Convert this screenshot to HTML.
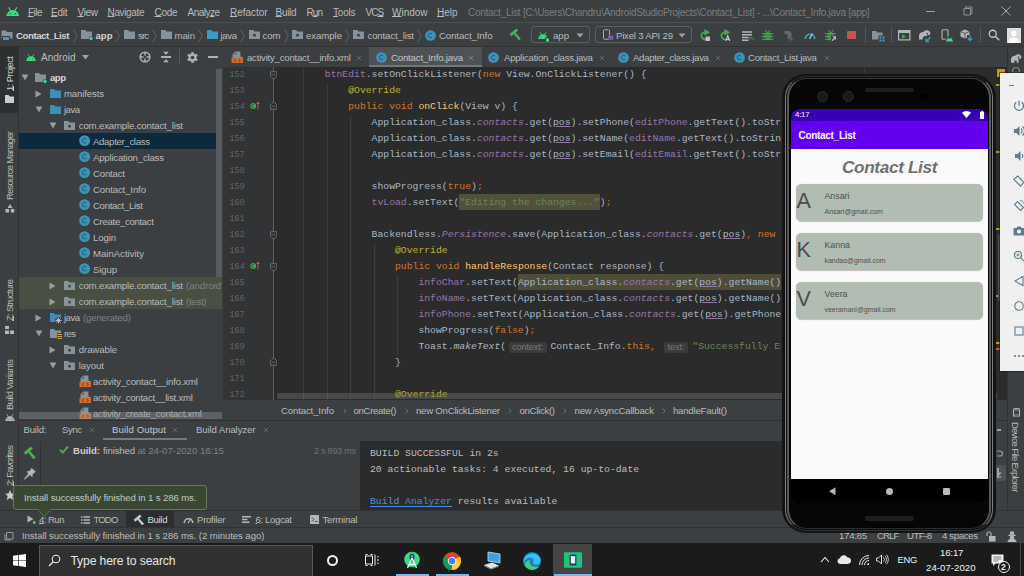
<!DOCTYPE html>
<html>
<head>
<meta charset="utf-8">
<title>Contact_List</title>
<style>
*{box-sizing:border-box;margin:0;padding:0}
html,body{width:1024px;height:576px;overflow:hidden;background:#3c3f41}
body{font-family:"Liberation Sans",sans-serif;font-size:9.6px;color:#bbbbbb;position:relative}
.a{position:absolute;white-space:nowrap}
.t{position:absolute;white-space:nowrap;line-height:12px;height:12px;color:#bbbbbb}
u{text-decoration:underline;text-underline-offset:.4px;text-decoration-thickness:1px}
.vt{position:absolute;white-space:nowrap;transform-origin:0 0;transform:rotate(-90deg);line-height:12px;height:12px;color:#bbbbbb}
.vtr{position:absolute;white-space:nowrap;transform-origin:0 0;transform:rotate(90deg);line-height:12px;height:12px;color:#bbbbbb}
.ln{position:absolute;font-family:"Liberation Mono",monospace;font-size:8.9px;color:#606366;line-height:16px;height:16px;text-align:right;width:30px;letter-spacing:-0.25px}
.cl{position:absolute;font-family:"Liberation Mono",monospace;font-size:9.75px;color:#a9b7c6;line-height:16px;height:16px;white-space:pre}
.mo{position:absolute;font-family:"Liberation Mono",monospace;font-size:9.75px;color:#bbbbbb;line-height:16px;height:16px;white-space:pre}
.k{color:#cc7832}.s{color:#6a8759}.an{color:#bbb529}.f{color:#9876aa}.fi{color:#9876aa;font-style:italic}.m{color:#ffc66d}.i{font-style:italic}
.pu{text-decoration:underline;text-decoration-color:#9876aa;text-underline-offset:1px}
.hl{background:#52503a;display:inline-block;height:16px;line-height:18px;vertical-align:top;margin-top:-1px}
.hl2{background:#4f4d38;display:inline-block;height:16px;line-height:18px;vertical-align:top;margin-top:-1px}
.hint{display:inline-block;font-family:"Liberation Sans",sans-serif;font-size:9.2px;line-height:11.5px;height:11.5px;color:#787878;background:#3b3b3b;border-radius:2px;padding:0 3.6px;letter-spacing:-0.15px}
</style>
</head>

<body>
<div class="a" style="left:0.0px;top:0.0px;width:1024.0px;height:23.0px;background:#3c3f41;"></div>
<svg class="a" style="left:5.5px;top:6.5px;" width="13.5" height="9.4" viewBox="0 0 20 14"><path d="M0.5 14a9.5 9.5 0 0 1 19 0z" fill="#3ddc84"/><path d="M4.2 1l2.6 4.4M15.8 1l-2.6 4.4" stroke="#3ddc84" stroke-width="1.6" stroke-linecap="round"/><circle cx="6" cy="10" r="1.1" fill="#3c3f41"/><circle cx="14" cy="10" r="1.1" fill="#3c3f41"/></svg>
<span class="t" style="left:28.0px;top:7.0px;font-size:10.00px;letter-spacing:-0.538px;"><u>F</u>ile</span>
<span class="t" style="left:51.0px;top:7.0px;font-size:10.00px;letter-spacing:-0.244px;"><u>E</u>dit</span>
<span class="t" style="left:77.5px;top:7.0px;font-size:10.00px;letter-spacing:-0.331px;"><u>V</u>iew</span>
<span class="t" style="left:107.5px;top:7.0px;font-size:10.00px;letter-spacing:-0.352px;"><u>N</u>avigate</span>
<span class="t" style="left:154.5px;top:7.0px;font-size:10.00px;letter-spacing:-0.302px;"><u>C</u>ode</span>
<span class="t" style="left:187.5px;top:7.0px;font-size:10.00px;letter-spacing:-0.513px;">Analy<u>z</u>e</span>
<span class="t" style="left:230.0px;top:7.0px;font-size:10.00px;letter-spacing:-0.042px;"><u>R</u>efactor</span>
<span class="t" style="left:275.5px;top:7.0px;font-size:10.00px;letter-spacing:-0.309px;"><u>B</u>uild</span>
<span class="t" style="left:306.5px;top:7.0px;font-size:10.00px;letter-spacing:-0.900px;">R<u>u</u>n</span>
<span class="t" style="left:333.0px;top:7.0px;font-size:10.00px;letter-spacing:-0.211px;"><u>T</u>ools</span>
<span class="t" style="left:365.5px;top:7.0px;font-size:10.00px;letter-spacing:-0.900px;">VC<u>S</u></span>
<span class="t" style="left:392.0px;top:7.0px;font-size:10.00px;letter-spacing:-0.013px;"><u>W</u>indow</span>
<span class="t" style="left:437.0px;top:7.0px;font-size:10.00px;letter-spacing:-0.022px;"><u>H</u>elp</span>
<span class="t" style="left:468.0px;top:7.0px;font-size:10.00px;letter-spacing:-0.267px;color:#7a7d80;">Contact_List [C:\Users\Chandru\AndroidStudioProjects\Contact_List] - ...\Contact_Info.java [app]</span>
<div class="a" style="left:926.0px;top:11.0px;width:9.0px;height:1.0px;background:#a0a3a5;"></div>
<svg class="a" style="left:963.0px;top:6.0px;" width="10.0" height="10.0" viewBox="0 0 20 20"><path d="M5 5V2h13v13h-3M2 5h13v13H2z" fill="none" stroke="#a0a3a5" stroke-width="1.6"/></svg>
<svg class="a" style="left:1001.0px;top:6.0px;" width="10.0" height="10.0" viewBox="0 0 20 20"><path d="M1 1l18 18M19 1L1 19" stroke="#b5b8ba" stroke-width="1.8"/></svg>
<div class="a" style="left:0.0px;top:22.0px;width:1024.0px;height:1.0px;background:#4d5052;"></div>
<svg class="a" style="left:1.0px;top:30.0px;" width="12.0" height="11.0" viewBox="0 0 24 22"><path d="M1 1h8l3 3h11v13H1z" fill="#87939a"/><rect x="3" y="13" width="14" height="8" fill="#3d9bc4" stroke="#3c3f41" stroke-width="2"/></svg>
<span class="t" style="left:16.0px;top:29.5px;font-size:9.60px;letter-spacing:-0.421px;color:#d2d2d2;font-weight:bold;">Contact_List</span>
<svg class="a" style="left:73.0px;top:28.5px;" width="5.0" height="14.0" viewBox="0 0 10 28"><path d="M1.5 1.5l7 12.5-7 12.5" fill="none" stroke="#6a6d70" stroke-width="1.6"/></svg>
<svg class="a" style="left:81.0px;top:30.0px;" width="13.0" height="11.0" viewBox="0 0 26 22"><path d="M0 0h8l3 3h11v15H0z" fill="#87939a"/><circle cx="20" cy="17" r="4.6" fill="#3c3f41"/><circle cx="20" cy="17" r="3.3" fill="#3ddc84"/></svg>
<span class="t" style="left:95.5px;top:29.5px;font-size:9.60px;letter-spacing:-0.033px;color:#d2d2d2;font-weight:bold;">app</span>
<svg class="a" style="left:115.0px;top:28.5px;" width="5.0" height="14.0" viewBox="0 0 10 28"><path d="M1.5 1.5l7 12.5-7 12.5" fill="none" stroke="#6a6d70" stroke-width="1.6"/></svg>
<svg class="a" style="left:124.0px;top:30.0px;" width="11.0" height="9.0" viewBox="0 0 22 18"><path d="M0 0h8l3 3h11v15H0z" fill="#87939a"/></svg>
<span class="t" style="left:138.0px;top:29.5px;font-size:9.60px;letter-spacing:-0.898px;">src</span>
<svg class="a" style="left:152.0px;top:28.5px;" width="5.0" height="14.0" viewBox="0 0 10 28"><path d="M1.5 1.5l7 12.5-7 12.5" fill="none" stroke="#6a6d70" stroke-width="1.6"/></svg>
<svg class="a" style="left:161.0px;top:30.0px;" width="11.0" height="9.0" viewBox="0 0 22 18"><path d="M0 0h8l3 3h11v15H0z" fill="#87939a"/></svg>
<span class="t" style="left:174.5px;top:29.5px;font-size:9.60px;letter-spacing:-0.102px;">main</span>
<svg class="a" style="left:198.0px;top:28.5px;" width="5.0" height="14.0" viewBox="0 0 10 28"><path d="M1.5 1.5l7 12.5-7 12.5" fill="none" stroke="#6a6d70" stroke-width="1.6"/></svg>
<svg class="a" style="left:206.5px;top:30.0px;" width="11.0" height="9.0" viewBox="0 0 22 18"><path d="M0 0h8l3 3h11v15H0z" fill="#3d9bc4"/></svg>
<span class="t" style="left:220.5px;top:29.5px;font-size:9.60px;letter-spacing:-0.370px;">java</span>
<svg class="a" style="left:240.0px;top:28.5px;" width="5.0" height="14.0" viewBox="0 0 10 28"><path d="M1.5 1.5l7 12.5-7 12.5" fill="none" stroke="#6a6d70" stroke-width="1.6"/></svg>
<svg class="a" style="left:248.5px;top:30.0px;" width="11.0" height="9.0" viewBox="0 0 22 18"><path d="M0 0h8l3 3h11v15H0z" fill="#87939a"/><circle cx="11" cy="10.5" r="2.8" fill="#3c3f41"/></svg>
<span class="t" style="left:262.5px;top:29.5px;font-size:9.60px;letter-spacing:-0.068px;">com</span>
<svg class="a" style="left:284.0px;top:28.5px;" width="5.0" height="14.0" viewBox="0 0 10 28"><path d="M1.5 1.5l7 12.5-7 12.5" fill="none" stroke="#6a6d70" stroke-width="1.6"/></svg>
<svg class="a" style="left:292.0px;top:30.0px;" width="11.0" height="9.0" viewBox="0 0 22 18"><path d="M0 0h8l3 3h11v15H0z" fill="#87939a"/><circle cx="11" cy="10.5" r="2.8" fill="#3c3f41"/></svg>
<span class="t" style="left:306.0px;top:29.5px;font-size:9.60px;letter-spacing:-0.047px;">example</span>
<svg class="a" style="left:345.0px;top:28.5px;" width="5.0" height="14.0" viewBox="0 0 10 28"><path d="M1.5 1.5l7 12.5-7 12.5" fill="none" stroke="#6a6d70" stroke-width="1.6"/></svg>
<svg class="a" style="left:353.0px;top:30.0px;" width="11.0" height="9.0" viewBox="0 0 22 18"><path d="M0 0h8l3 3h11v15H0z" fill="#87939a"/><circle cx="11" cy="10.5" r="2.8" fill="#3c3f41"/></svg>
<span class="t" style="left:367.5px;top:29.5px;font-size:9.60px;letter-spacing:-0.138px;">contact_list</span>
<svg class="a" style="left:417.0px;top:28.5px;" width="5.0" height="14.0" viewBox="0 0 10 28"><path d="M1.5 1.5l7 12.5-7 12.5" fill="none" stroke="#6a6d70" stroke-width="1.6"/></svg>
<svg class="a" style="left:424.5px;top:29.5px;" width="11.0" height="11.0" viewBox="0 0 22 22"><circle cx="11" cy="11" r="10.700" fill="#3a95bb"/><path d="M14.300 8a4.400 4.400 0 1 0 0 6" fill="none" stroke="#2b4f62" stroke-width="1.900"/></svg>
<span class="t" style="left:439.0px;top:29.5px;font-size:9.60px;letter-spacing:-0.085px;">Contact_Info</span>
<svg class="a" style="left:509.1px;top:28.3px;" width="12.6" height="12.6" viewBox="0 0 28 28"><g transform="translate(10.800,9.600) rotate(-40)" fill="#4caf57"><rect x="-9.700" y="-3" width="19.400" height="6.200"/><path d="M-2.300 0h4.600l.700 20.500h-6z"/></g></svg>
<div class="a" style="left:531.0px;top:26.0px;width:58.5px;height:17.0px;background:transparent;border:1px solid #5e6060;border-radius:3px"></div>
<svg class="a" style="left:538.0px;top:32.0px;" width="10.0" height="7.0" viewBox="0 0 20 14"><path d="M0.5 14a9.5 9.5 0 0 1 19 0z" fill="#3ddc84"/><path d="M4.2 1l2.6 4.4M15.8 1l-2.6 4.4" stroke="#3ddc84" stroke-width="1.6" stroke-linecap="round"/><circle cx="6" cy="10" r="1.1" fill="#3c3f41"/><circle cx="14" cy="10" r="1.1" fill="#3c3f41"/></svg>
<div class="a" style="left:545.5px;top:38.0px;width:3.5px;height:3.5px;background:#3ddc84;border-radius:2px;box-shadow:0 0 0 1px #3c3f41"></div>
<span class="t" style="left:553.0px;top:29.5px;font-size:9.60px;letter-spacing:-0.008px;">app</span>
<svg class="a" style="left:576.0px;top:33.0px;" width="8.0" height="5.0" viewBox="0 0 16 10"><path d="M1 1h14L8 9z" fill="#a0a3a5"/></svg>
<div class="a" style="left:594.5px;top:26.0px;width:97.5px;height:17.0px;background:transparent;border:1px solid #5e6060;border-radius:3px"></div>
<svg class="a" style="left:602.0px;top:29.0px;" width="12.0" height="12.0" viewBox="0 0 24 24"><rect x="3" y="1.5" width="12" height="19" rx="2" fill="none" stroke="#a7aaad" stroke-width="2"/><rect x="12" y="13" width="10" height="8" fill="#3c3f41"/><rect x="13.5" y="14.5" width="8" height="6" fill="none" stroke="#b05fc4" stroke-width="1.6"/><path d="M15 19l5-1.5-4-2.5z" fill="#3ddc84"/></svg>
<span class="t" style="left:616.0px;top:29.5px;font-size:9.60px;letter-spacing:-0.213px;">Pixel 3 API 29</span>
<svg class="a" style="left:678.0px;top:33.0px;" width="8.0" height="5.0" viewBox="0 0 16 10"><path d="M1 1h14L8 9z" fill="#a0a3a5"/></svg>
<svg class="a" style="left:699.3px;top:29.0px;" width="11.5" height="12.0" viewBox="0 0 23 24"><path d="M10.500 6.500A7.200 7.200 0 1 0 13.500 20.600" fill="none" stroke="#4aa854" stroke-width="3.500"/><path d="M10.500 0l12 6.500-12 6.500z" fill="#4aa854"/><rect x="13" y="15" width="9" height="9" fill="#c0c3c5"/></svg>
<svg class="a" style="left:719.3px;top:29.0px;" width="11.5" height="12.0" viewBox="0 0 23 24"><path d="M10.500 6.500A7.200 7.200 0 1 0 13.500 20.600" fill="none" stroke="#4aa854" stroke-width="3.500"/><path d="M10.500 0l12 6.500-12 6.500z" fill="#4aa854"/><path d="M13.500 24l4-10.500 4 10.500M15 21h5" fill="none" stroke="#c4c7c9" stroke-width="2.400"/></svg>
<svg class="a" style="left:742.0px;top:30.5px;" width="12.0" height="10.0" viewBox="0 0 24 20"><path d="M0 2h20M0 7.500h20M0 13h13M0 18.500h13" stroke="#b4b7ba" stroke-width="2.900"/><path d="M16 13.500c4-2 7 0 7 4m-7.500-4.500l.5 4" stroke="#4aa854" stroke-width="2" fill="none"/></svg>
<svg class="a" style="left:762.0px;top:28.5px;" width="11.5" height="12.5" viewBox="0 0 23 25"><ellipse cx="11.500" cy="14.500" rx="6.800" ry="8" fill="#4aa854"/><path d="M7 2l3.500 5M16 2l-3.500 5" stroke="#4aa854" stroke-width="2"/><path d="M0 9.500h23M0 15h23M0 20.500h23" stroke="#4aa854" stroke-width="2"/><path d="M5.500 12.200h12M5.500 17.800h12" stroke="#3c3f41" stroke-width="1.300"/></svg>
<svg class="a" style="left:783.0px;top:29.5px;" width="12.0" height="12.0" viewBox="0 0 24 24"><path d="M3 2h10l4 4v12H9V8H3z" fill="#66696c"/><path d="M12 12l10 5.5-10 5.5z" fill="#5a5d60"/></svg>
<svg class="a" style="left:803.5px;top:30.0px;" width="12.0" height="10.0" viewBox="0 0 24 20"><path d="M2.5 18A9.5 9.5 0 0 1 21.5 18" fill="none" stroke="#3d9bc4" stroke-width="3.4"/><path d="M11 18l6-11" stroke="#c0c3c5" stroke-width="2.6"/></svg>
<svg class="a" style="left:824.5px;top:28.5px;" width="11.5" height="12.5" viewBox="0 0 23 25"><ellipse cx="11.500" cy="14.500" rx="6.800" ry="8" fill="#4aa854"/><path d="M7 2l3.500 5M16 2l-3.500 5" stroke="#4aa854" stroke-width="2"/><path d="M0 9.500h23M0 15h23M0 20.500h23" stroke="#4aa854" stroke-width="2"/><path d="M5.500 12.200h12M5.500 17.800h12" stroke="#3c3f41" stroke-width="1.300"/><rect x="12" y="13" width="12" height="12" fill="#3c3f41"/><path d="M14 23.500l8-8m-6.500 0h6.500v6.500" stroke="#c0c3c5" stroke-width="2.400" fill="none"/></svg>
<div class="a" style="left:847.0px;top:30.5px;width:9.0px;height:8.5px;background:#c75450;border-radius:1px"></div>
<div class="a" style="left:864.5px;top:27.0px;width:1.0px;height:16.0px;background:#555759;"></div>
<svg class="a" style="left:872.0px;top:29.5px;" width="12.5" height="12.0" viewBox="0 0 25 24"><path d="M0 2h8l3 3h10v14H0z" fill="#87939a"/><rect x="13" y="11" width="12" height="13" fill="#3c3f41"/><path d="M15 13h4v4h-4zM21 13h4v4h-4zM15 19h4v4h-4zM21 19h4v4h-4z" fill="#3d9bc4"/></svg>
<div class="a" style="left:891.0px;top:27.0px;width:1.0px;height:16.0px;background:#555759;"></div>
<svg class="a" style="left:898.0px;top:30.0px;" width="12.5" height="10.5" viewBox="0 0 25 21"><rect x="1.2" y="1.2" width="22.6" height="18.6" fill="none" stroke="#b4b7ba" stroke-width="2.4"/><rect x="1" y="1" width="23" height="5" fill="#b4b7ba"/><path d="M8 8.5l8 4.5-8 4.5z" fill="#4aa854"/></svg>
<svg class="a" style="left:918.0px;top:30.0px;" width="13.0" height="10.0" viewBox="0 0 26 20"><path d="M2 19v-7c0-5 4-8 9-8 2-3 6-4 9-3 4 1 6 5 4 8-1 2-4 2-5 0-.6-1.200 .5-2.600 2-2-.5-1.800-3-2-4.500-.5 1 2 2 4 2 6v6.500h-4v-5h-5v5z" fill="#b4b7ba"/></svg>
<svg class="a" style="left:924.0px;top:36.0px;" width="8.0" height="7.0" viewBox="0 0 16 14"><rect width="16" height="14" fill="#3c3f41"/><path d="M13 2L4 11m0-6v6h6" stroke="#3d9bc4" stroke-width="2.6" fill="none"/></svg>
<svg class="a" style="left:941.0px;top:29.0px;" width="12.0" height="13.0" viewBox="0 0 24 26"><rect x="2" y="1.500" width="12" height="19" rx="2" fill="none" stroke="#b4b7ba" stroke-width="2.2"/><rect x="9" y="15" width="15" height="11" fill="#3c3f41"/><path d="M10.500 25a6.500 6.500 0 0 1 13 0z" fill="#3ddc84"/><path d="M12.500 17l1.500 2.500M21.500 17l-1.500 2.500" stroke="#3ddc84" stroke-width="1.400"/></svg>
<svg class="a" style="left:960.0px;top:29.0px;" width="13.0" height="13.0" viewBox="0 0 26 26"><path d="M10 1l9 4v10l-9 4-9-4V5z" fill="#b4b7ba"/><path d="M10 9v10M1 5l9 4 9-4" stroke="#3c3f41" stroke-width="1.600" fill="none"/><rect x="14" y="12" width="12" height="14" fill="#3c3f41"/><path d="M20 13v10m-4.500-4.500l4.500 4.500 4.500-4.500" stroke="#3d9bc4" stroke-width="2.600" fill="none"/></svg>
<div class="a" style="left:980.0px;top:27.0px;width:1.0px;height:16.0px;background:#555759;"></div>
<svg class="a" style="left:987.5px;top:29.0px;" width="12.0" height="12.0" viewBox="0 0 24 24"><circle cx="9.500" cy="9.500" r="7" fill="none" stroke="#c4c7c9" stroke-width="2.600"/><path d="M14.500 14.500l8 8" stroke="#c4c7c9" stroke-width="3"/></svg>
<div class="a" style="left:1007.0px;top:27.5px;width:13.5px;height:15.0px;background:#dcdcdc;"></div>
<svg class="a" style="left:1007.0px;top:27.5px;" width="13.5" height="15.0" viewBox="0 0 27 30"><circle cx="13.500" cy="11" r="5.500" fill="#fff"/><path d="M3 30c0-8 5-11 10.500-11S24 22 24 30z" fill="#fff"/></svg>
<div class="a" style="left:0.0px;top:46.0px;width:1024.0px;height:1.0px;background:#323232;"></div>
<div class="a" style="left:0.0px;top:47.0px;width:18.0px;height:463.0px;background:#3c3f41;"></div>
<div class="a" style="left:0.0px;top:46.0px;width:18.0px;height:67.0px;background:#2d2f30;"></div>
<div class="a" style="left:18.0px;top:47.0px;width:1.0px;height:463.0px;background:#323232;"></div>
<span class="vt" style="left:4.0px;top:91.0px;font-size:9.40px;letter-spacing:-0.523px;color:#d0d0d0"><u>1</u>: Project</span>
<svg class="a" style="left:5.0px;top:95.0px;" width="9.0" height="8.0" viewBox="0 0 18 16"><path d="M0 0h7l3 3h8v13H0z" fill="#c9ccce"/></svg>
<span class="vt" style="left:4.0px;top:200.0px;font-size:9.40px;letter-spacing:-0.729px;color:#bbbbbb">Resource Manager</span>
<svg class="a" style="left:5.0px;top:204.0px;" width="10.0" height="9.0" viewBox="0 0 20 18"><path d="M10 0l5 8H5z" fill="#b4b7ba"/><rect x="1" y="10" width="7" height="7" fill="#b4b7ba"/><circle cx="15" cy="13.500" r="4" fill="#b4b7ba"/></svg>
<span class="vt" style="left:4.0px;top:321.0px;font-size:9.40px;letter-spacing:-0.645px;color:#bbbbbb"><u>Z</u>: Structure</span>
<svg class="a" style="left:5.0px;top:326.0px;" width="9.0" height="8.0" viewBox="0 0 18 16"><rect x="0" y="0" width="8" height="6" fill="#b4b7ba"/><rect x="0" y="9" width="8" height="7" fill="#b4b7ba"/><rect x="10" y="9" width="8" height="7" fill="#b4b7ba"/></svg>
<span class="vt" style="left:4.0px;top:410.0px;font-size:9.40px;letter-spacing:-0.484px;color:#bbbbbb">Build Variants</span>
<svg class="a" style="left:5.0px;top:414.0px;" width="10.0" height="7.0" viewBox="0 0 20 14"><path d="M0.5 14a9.5 9.5 0 0 1 19 0z" fill="#b4b7ba"/><path d="M4.2 1l2.6 4.4M15.8 1l-2.6 4.4" stroke="#b4b7ba" stroke-width="1.6" stroke-linecap="round"/><circle cx="6" cy="10" r="1.1" fill="#3c3f41"/><circle cx="14" cy="10" r="1.1" fill="#3c3f41"/></svg>
<span class="vt" style="left:4.0px;top:486.0px;font-size:9.40px;letter-spacing:-0.737px;color:#bbbbbb"><u>2</u>: Favorites</span>
<svg class="a" style="left:5.0px;top:490.0px;" width="10.0" height="10.0" viewBox="0 0 20 20"><path d="M10 0l3 7 7 .6-5.400 4.600L16.500 20 10 16 3.500 20l1.900-7.800L0 7.600 7 7z" fill="#c9ccce"/></svg>
<div class="a" style="left:19.0px;top:47.0px;width:204.0px;height:373.0px;background:#3c3f41;"></div>
<svg class="a" style="left:26.0px;top:53.5px;" width="10.0" height="7.0" viewBox="0 0 20 14"><path d="M0.5 14a9.5 9.5 0 0 1 19 0z" fill="#3ddc84"/><path d="M4.2 1l2.6 4.4M15.8 1l-2.6 4.4" stroke="#3ddc84" stroke-width="1.6" stroke-linecap="round"/><circle cx="6" cy="10" r="1.1" fill="#3c3f41"/><circle cx="14" cy="10" r="1.1" fill="#3c3f41"/></svg>
<span class="t" style="left:41.0px;top:52.0px;font-size:10.00px;letter-spacing:0.006px;">Android</span>
<svg class="a" style="left:82.0px;top:55.0px;" width="7.0" height="4.5" viewBox="0 0 14 9"><path d="M0 0h14L7 9z" fill="#a0a3a5"/></svg>
<svg class="a" style="left:139.0px;top:51.0px;" width="12.0" height="12.0" viewBox="0 0 24 24"><circle cx="12" cy="12" r="9.700" fill="none" stroke="#afb1b3" stroke-width="3"/><path d="M12 2.500v6.500M12 15v6.500M2.500 12h6.500M15 12h6.500" stroke="#afb1b3" stroke-width="3"/></svg>
<svg class="a" style="left:160.0px;top:51.0px;" width="12.0" height="12.0" viewBox="0 0 24 24"><path d="M2 12h20" stroke="#afb1b3" stroke-width="4"/><path d="M6.500 1.500h11l-5.500 6.500zM6.500 22.500h11l-5.500-6.500z" fill="#afb1b3"/></svg>
<div class="a" style="left:179.0px;top:48.5px;width:1.0px;height:15.5px;background:#555759;"></div>
<svg class="a" style="left:186.5px;top:51.5px;" width="11.0" height="11.0" viewBox="0 0 24 24"><g transform="translate(12 12)" fill="#afb1b3"><rect x="-2.700" y="-11.800" width="5.400" height="5.500" transform="rotate(0)"/><rect x="-2.700" y="-11.800" width="5.400" height="5.500" transform="rotate(60)"/><rect x="-2.700" y="-11.800" width="5.400" height="5.500" transform="rotate(120)"/><rect x="-2.700" y="-11.800" width="5.400" height="5.500" transform="rotate(180)"/><rect x="-2.700" y="-11.800" width="5.400" height="5.500" transform="rotate(240)"/><rect x="-2.700" y="-11.800" width="5.400" height="5.500" transform="rotate(300)"/><circle r="6.300" fill="none" stroke="#afb1b3" stroke-width="4.600"/></g></svg>
<div class="a" style="left:208.0px;top:55.8px;width:10.0px;height:2.2px;background:#afb1b3;"></div>
<div class="a" style="left:19.0px;top:133.0px;width:203.0px;height:16.0px;background:#0d293e;"></div>
<div class="a" style="left:19.0px;top:277.0px;width:203.0px;height:32.0px;background:#494f43;"></div>
<div class="a" style="left:19px;top:47px;width:203px;height:371.5px;overflow:hidden"><div class="a" style="left:-19px;top:-47px">
<svg class="a" style="left:21.0px;top:74.2px;" width="8.0" height="7.0" viewBox="0 0 16 14"><path d="M1 1h14l-7 12z" fill="#9b9ea1"/></svg>
<svg class="a" style="left:35.0px;top:72.8px;" width="13.0" height="11.0" viewBox="0 0 26 22"><path d="M0 0h8l3 3h11v15H0z" fill="#87939a"/><circle cx="20" cy="17" r="4.6" fill="#3c3f41"/><circle cx="20" cy="17" r="3.3" fill="#3ddc84"/></svg>
<span class="t" style="left:50.0px;top:71.8px;font-size:9.60px;letter-spacing:-0.533px;color:#d8d8d8;font-weight:bold;">app</span>
<svg class="a" style="left:35.0px;top:89.8px;" width="7.0" height="8.0" viewBox="0 0 14 16"><path d="M1 1l12 7-12 7z" fill="#9b9ea1"/></svg>
<svg class="a" style="left:50.0px;top:88.8px;" width="11.0" height="9.0" viewBox="0 0 22 18"><path d="M0 0h8l3 3h11v15H0z" fill="#3d8fb8"/></svg>
<span class="t" style="left:64.0px;top:87.8px;font-size:9.60px;letter-spacing:-0.135px;">manifests</span>
<svg class="a" style="left:35.0px;top:106.2px;" width="8.0" height="7.0" viewBox="0 0 16 14"><path d="M1 1h14l-7 12z" fill="#9b9ea1"/></svg>
<svg class="a" style="left:50.0px;top:104.8px;" width="11.0" height="9.0" viewBox="0 0 22 18"><path d="M0 0h8l3 3h11v15H0z" fill="#3d8fb8"/></svg>
<span class="t" style="left:64.0px;top:103.8px;font-size:9.60px;letter-spacing:-0.537px;">java</span>
<svg class="a" style="left:49.0px;top:122.2px;" width="8.0" height="7.0" viewBox="0 0 16 14"><path d="M1 1h14l-7 12z" fill="#9b9ea1"/></svg>
<svg class="a" style="left:64.0px;top:120.8px;" width="11.0" height="9.0" viewBox="0 0 22 18"><path d="M0 0h8l3 3h11v15H0z" fill="#87939a"/><circle cx="11" cy="10.5" r="2.8" fill="#3c3f41"/></svg>
<span class="t" style="left:78.8px;top:119.8px;font-size:9.60px;letter-spacing:-0.153px;">com.example.contact_list</span>
<svg class="a" style="left:78.5px;top:135.3px;" width="11.2" height="11.2" viewBox="0 0 22 22"><circle cx="11" cy="11" r="10.700" fill="#3a95bb"/><path d="M14.300 8a4.400 4.400 0 1 0 0 6" fill="none" stroke="#2b4f62" stroke-width="1.900"/></svg>
<span class="t" style="left:93.0px;top:135.8px;font-size:9.60px;letter-spacing:-0.319px;">Adapter_class</span>
<svg class="a" style="left:78.5px;top:151.3px;" width="11.2" height="11.2" viewBox="0 0 22 22"><circle cx="11" cy="11" r="10.700" fill="#3a95bb"/><path d="M14.300 8a4.400 4.400 0 1 0 0 6" fill="none" stroke="#2b4f62" stroke-width="1.900"/></svg>
<span class="t" style="left:93.0px;top:151.8px;font-size:9.60px;letter-spacing:-0.198px;">Application_class</span>
<svg class="a" style="left:78.5px;top:167.3px;" width="11.2" height="11.2" viewBox="0 0 22 22"><circle cx="11" cy="11" r="10.700" fill="#3a95bb"/><path d="M14.300 8a4.400 4.400 0 1 0 0 6" fill="none" stroke="#2b4f62" stroke-width="1.900"/></svg>
<span class="t" style="left:93.0px;top:167.8px;font-size:9.60px;letter-spacing:-0.180px;">Contact</span>
<svg class="a" style="left:78.5px;top:183.3px;" width="11.2" height="11.2" viewBox="0 0 22 22"><circle cx="11" cy="11" r="10.700" fill="#3a95bb"/><path d="M14.300 8a4.400 4.400 0 1 0 0 6" fill="none" stroke="#2b4f62" stroke-width="1.900"/></svg>
<span class="t" style="left:93.0px;top:183.8px;font-size:9.60px;letter-spacing:-0.130px;">Contact_Info</span>
<svg class="a" style="left:78.5px;top:199.3px;" width="11.2" height="11.2" viewBox="0 0 22 22"><circle cx="11" cy="11" r="10.700" fill="#3a95bb"/><path d="M14.300 8a4.400 4.400 0 1 0 0 6" fill="none" stroke="#2b4f62" stroke-width="1.900"/></svg>
<span class="t" style="left:93.0px;top:199.8px;font-size:9.60px;letter-spacing:-0.305px;">Contact_List</span>
<svg class="a" style="left:78.5px;top:215.3px;" width="11.2" height="11.2" viewBox="0 0 22 22"><circle cx="11" cy="11" r="10.700" fill="#3a95bb"/><path d="M14.300 8a4.400 4.400 0 1 0 0 6" fill="none" stroke="#2b4f62" stroke-width="1.900"/></svg>
<span class="t" style="left:93.0px;top:215.8px;font-size:9.60px;letter-spacing:-0.315px;">Create_contact</span>
<svg class="a" style="left:78.5px;top:231.3px;" width="11.2" height="11.2" viewBox="0 0 22 22"><circle cx="11" cy="11" r="10.700" fill="#3a95bb"/><path d="M14.300 8a4.400 4.400 0 1 0 0 6" fill="none" stroke="#2b4f62" stroke-width="1.900"/></svg>
<span class="t" style="left:93.0px;top:231.8px;font-size:9.60px;letter-spacing:-0.122px;">Login</span>
<svg class="a" style="left:78.5px;top:247.3px;" width="11.2" height="11.2" viewBox="0 0 22 22"><circle cx="11" cy="11" r="10.700" fill="#3a95bb"/><path d="M14.300 8a4.400 4.400 0 1 0 0 6" fill="none" stroke="#2b4f62" stroke-width="1.900"/></svg>
<span class="t" style="left:93.0px;top:247.8px;font-size:9.60px;letter-spacing:-0.019px;">MainActivity</span>
<svg class="a" style="left:78.5px;top:263.4px;" width="11.2" height="11.2" viewBox="0 0 22 22"><circle cx="11" cy="11" r="10.700" fill="#3a95bb"/><path d="M14.300 8a4.400 4.400 0 1 0 0 6" fill="none" stroke="#2b4f62" stroke-width="1.900"/></svg>
<span class="t" style="left:93.0px;top:263.8px;font-size:9.60px;letter-spacing:-0.138px;">Sigup</span>
<svg class="a" style="left:49.0px;top:281.8px;" width="7.0" height="8.0" viewBox="0 0 14 16"><path d="M1 1l12 7-12 7z" fill="#9b9ea1"/></svg>
<svg class="a" style="left:64.0px;top:280.8px;" width="11.0" height="9.0" viewBox="0 0 22 18"><path d="M0 0h8l3 3h11v15H0z" fill="#87939a"/><circle cx="11" cy="10.5" r="2.8" fill="#494f43"/></svg>
<span class="t" style="left:78.8px;top:279.8px;font-size:9.60px;letter-spacing:-0.153px;">com.example.contact_list</span>
<span class="t" style="left:186.0px;top:279.8px;font-size:9.60px;letter-spacing:-0.002px;color:#7f8385;">(androidTest)</span>
<svg class="a" style="left:49.0px;top:297.8px;" width="7.0" height="8.0" viewBox="0 0 14 16"><path d="M1 1l12 7-12 7z" fill="#9b9ea1"/></svg>
<svg class="a" style="left:64.0px;top:296.8px;" width="11.0" height="9.0" viewBox="0 0 22 18"><path d="M0 0h8l3 3h11v15H0z" fill="#87939a"/><circle cx="11" cy="10.5" r="2.8" fill="#494f43"/></svg>
<span class="t" style="left:78.8px;top:295.8px;font-size:9.60px;letter-spacing:-0.153px;">com.example.contact_list</span>
<span class="t" style="left:186.0px;top:295.8px;font-size:9.60px;letter-spacing:-0.273px;color:#7f8385;">(test)</span>
<svg class="a" style="left:35.0px;top:313.8px;" width="7.0" height="8.0" viewBox="0 0 14 16"><path d="M1 1l12 7-12 7z" fill="#9b9ea1"/></svg>
<svg class="a" style="left:50.0px;top:312.8px;" width="11.0" height="9.0" viewBox="0 0 22 18"><path d="M0 0h8l3 3h11v15H0z" fill="#3d8fb8"/></svg>
<svg class="a" style="left:54.5px;top:317.2px;" width="7.0" height="7.0" viewBox="0 0 14 14"><circle cx="7" cy="7" r="7" fill="#3c3f41"/><path d="M7 1v12M1 7h12M2.800 2.800l8.400 8.400M11.200 2.800l-8.400 8.400" stroke="#d0d3d5" stroke-width="1.600"/></svg>
<span class="t" style="left:64.0px;top:311.8px;font-size:9.60px;letter-spacing:-0.537px;">java</span>
<span class="t" style="left:83.0px;top:311.8px;font-size:9.60px;letter-spacing:-0.163px;color:#7f8385;">(generated)</span>
<svg class="a" style="left:35.0px;top:330.2px;" width="8.0" height="7.0" viewBox="0 0 16 14"><path d="M1 1h14l-7 12z" fill="#9b9ea1"/></svg>
<svg class="a" style="left:50.0px;top:328.8px;" width="11.0" height="9.0" viewBox="0 0 22 18"><path d="M0 0h8l3 3h11v15H0z" fill="#87939a"/></svg>
<svg class="a" style="left:56.5px;top:333.2px;" width="5.5" height="6.5" viewBox="0 0 11 13"><rect width="11" height="13" fill="#3c3f41"/><path d="M1 3h10M1 7h10M1 11h10" stroke="#e0a030" stroke-width="2.400"/></svg>
<span class="t" style="left:64.0px;top:327.8px;font-size:9.60px;letter-spacing:-0.668px;">res</span>
<svg class="a" style="left:49.0px;top:345.8px;" width="7.0" height="8.0" viewBox="0 0 14 16"><path d="M1 1l12 7-12 7z" fill="#9b9ea1"/></svg>
<svg class="a" style="left:64.0px;top:344.8px;" width="11.0" height="9.0" viewBox="0 0 22 18"><path d="M0 0h8l3 3h11v15H0z" fill="#87939a"/><circle cx="11" cy="10.5" r="2.8" fill="#3c3f41"/></svg>
<span class="t" style="left:78.8px;top:343.8px;font-size:9.60px;letter-spacing:-0.101px;">drawable</span>
<svg class="a" style="left:49.0px;top:362.2px;" width="8.0" height="7.0" viewBox="0 0 16 14"><path d="M1 1h14l-7 12z" fill="#9b9ea1"/></svg>
<svg class="a" style="left:64.0px;top:360.8px;" width="11.0" height="9.0" viewBox="0 0 22 18"><path d="M0 0h8l3 3h11v15H0z" fill="#87939a"/><circle cx="11" cy="10.5" r="2.8" fill="#3c3f41"/></svg>
<span class="t" style="left:78.8px;top:359.8px;font-size:9.60px;letter-spacing:-0.073px;">layout</span>
<svg class="a" style="left:79.2px;top:375.2px;" width="12.5" height="12.5" viewBox="0 0 24 24"><path d="M8 1h10v10h4v3H3v-8z" fill="#87939a"/><path d="M10 1v6H4z" fill="#3c3f41" opacity=".55"/><rect x="1" y="13" width="22" height="10" fill="#d06c2c"/><path d="M9 15.5l-3 2.5 3 2.5M15 15.5l3 2.5-3 2.5" stroke="#5a2a0a" stroke-width="1.6" fill="none"/></svg>
<span class="t" style="left:93.0px;top:375.8px;font-size:9.60px;letter-spacing:-0.175px;">activity_contact__info.xml</span>
<svg class="a" style="left:79.2px;top:391.2px;" width="12.5" height="12.5" viewBox="0 0 24 24"><path d="M8 1h10v10h4v3H3v-8z" fill="#87939a"/><path d="M10 1v6H4z" fill="#3c3f41" opacity=".55"/><rect x="1" y="13" width="22" height="10" fill="#d06c2c"/><path d="M9 15.5l-3 2.5 3 2.5M15 15.5l3 2.5-3 2.5" stroke="#5a2a0a" stroke-width="1.6" fill="none"/></svg>
<span class="t" style="left:93.0px;top:391.8px;font-size:9.60px;letter-spacing:-0.225px;">activity_contact__list.xml</span>
<svg class="a" style="left:79.2px;top:407.2px;" width="12.5" height="12.5" viewBox="0 0 24 24"><path d="M8 1h10v10h4v3H3v-8z" fill="#87939a"/><path d="M10 1v6H4z" fill="#3c3f41" opacity=".55"/><rect x="1" y="13" width="22" height="10" fill="#d06c2c"/><path d="M9 15.5l-3 2.5 3 2.5M15 15.5l3 2.5-3 2.5" stroke="#5a2a0a" stroke-width="1.6" fill="none"/></svg>
<span class="t" style="left:93.0px;top:407.8px;font-size:9.60px;letter-spacing:-0.240px;">activity_create_contact.xml</span>
</div></div>
<div class="a" style="left:216.0px;top:69.0px;width:6.0px;height:208.0px;background:#595b5d;"></div>
<div class="a" style="left:19.0px;top:412.0px;width:203.0px;height:6.5px;background:rgba(150,152,154,0.38);"></div>
<div class="a" style="left:223.0px;top:47.0px;width:1.0px;height:373.0px;background:#2f3133;"></div>
<div class="a" style="left:223.0px;top:47.0px;width:784.0px;height:20.0px;background:#3c3f41;"></div>
<svg class="a" style="left:230.7px;top:51.0px;" width="12.5" height="12.5" viewBox="0 0 24 24"><path d="M8 1h10v10h4v3H3v-8z" fill="#87939a"/><path d="M10 1v6H4z" fill="#3c3f41" opacity=".55"/><rect x="1" y="13" width="22" height="10" fill="#d06c2c"/><path d="M9 15.5l-3 2.5 3 2.5M15 15.5l3 2.5-3 2.5" stroke="#5a2a0a" stroke-width="1.6" fill="none"/></svg>
<span class="t" style="left:247.0px;top:51.5px;font-size:9.60px;letter-spacing:-0.215px;">activity_contact__info.xml</span>
<svg class="a" style="left:356.0px;top:54.5px;" width="6.0" height="6.0" viewBox="0 0 12 12"><path d="M1.5 1.5l9 9M10.5 1.5l-9 9" stroke="#6e7275" stroke-width="1.5"/></svg>
<div class="a" style="left:368.5px;top:46.5px;width:113.0px;height:20.5px;background:#4e5254;"></div>
<div class="a" style="left:368.5px;top:64.8px;width:113.0px;height:2.2px;background:#71777b;"></div>
<svg class="a" style="left:376.0px;top:51.5px;" width="11.0" height="11.0" viewBox="0 0 22 22"><circle cx="11" cy="11" r="10.700" fill="#3a95bb"/><path d="M14.300 8a4.400 4.400 0 1 0 0 6" fill="none" stroke="#2b4f62" stroke-width="1.900"/></svg>
<span class="t" style="left:391.0px;top:51.5px;font-size:9.60px;letter-spacing:-0.169px;color:#c8c8c8;">Contact_Info.java</span>
<svg class="a" style="left:468.0px;top:54.5px;" width="6.0" height="6.0" viewBox="0 0 12 12"><path d="M1.5 1.5l9 9M10.5 1.5l-9 9" stroke="#8a8d90" stroke-width="1.5"/></svg>
<svg class="a" style="left:488.0px;top:51.5px;" width="11.0" height="11.0" viewBox="0 0 22 22"><circle cx="11" cy="11" r="10.700" fill="#3a95bb"/><path d="M14.300 8a4.400 4.400 0 1 0 0 6" fill="none" stroke="#2b4f62" stroke-width="1.900"/></svg>
<span class="t" style="left:504.0px;top:51.5px;font-size:9.60px;letter-spacing:-0.259px;">Application_class.java</span>
<svg class="a" style="left:599.0px;top:54.5px;" width="6.0" height="6.0" viewBox="0 0 12 12"><path d="M1.5 1.5l9 9M10.5 1.5l-9 9" stroke="#6e7275" stroke-width="1.5"/></svg>
<svg class="a" style="left:617.5px;top:51.5px;" width="11.0" height="11.0" viewBox="0 0 22 22"><circle cx="11" cy="11" r="10.700" fill="#3a95bb"/><path d="M14.300 8a4.400 4.400 0 1 0 0 6" fill="none" stroke="#2b4f62" stroke-width="1.900"/></svg>
<span class="t" style="left:633.0px;top:51.5px;font-size:9.60px;letter-spacing:-0.300px;">Adapter_class.java</span>
<svg class="a" style="left:715.0px;top:54.5px;" width="6.0" height="6.0" viewBox="0 0 12 12"><path d="M1.5 1.5l9 9M10.5 1.5l-9 9" stroke="#6e7275" stroke-width="1.5"/></svg>
<svg class="a" style="left:734.0px;top:51.5px;" width="11.0" height="11.0" viewBox="0 0 22 22"><circle cx="11" cy="11" r="10.700" fill="#3a95bb"/><path d="M14.300 8a4.400 4.400 0 1 0 0 6" fill="none" stroke="#2b4f62" stroke-width="1.900"/></svg>
<span class="t" style="left:748.0px;top:51.5px;font-size:9.60px;letter-spacing:-0.290px;">Contact_List.java</span>
<svg class="a" style="left:823.5px;top:54.5px;" width="6.0" height="6.0" viewBox="0 0 12 12"><path d="M1.5 1.5l9 9M10.5 1.5l-9 9" stroke="#6e7275" stroke-width="1.5"/></svg>
<div class="a" style="left:223.0px;top:67.0px;width:50.0px;height:333.0px;background:#313335;"></div>
<div class="a" style="left:273.0px;top:67.0px;width:734.0px;height:333.0px;background:#2b2b2b;"></div>
<div class="a" style="left:273.0px;top:67.0px;width:1.0px;height:333.0px;background:#5e5e5e;"></div>
<div class="a" style="left:863.5px;top:67.0px;width:1.0px;height:333.0px;background:#3a3a3a;"></div>
<div class="a" style="left:303.4px;top:67.0px;width:1.0px;height:336.0px;background:#3d3d3d;"></div>
<div class="a" style="left:326.8px;top:83.0px;width:1.0px;height:320.0px;background:#3d3d3d;"></div>
<div class="a" style="left:350.2px;top:115.0px;width:1.0px;height:288.0px;background:#3d3d3d;"></div>
<div class="a" style="left:373.6px;top:243.0px;width:1.0px;height:160.0px;background:#3d3d3d;"></div>
<div class="a" style="left:397.0px;top:275.0px;width:1.0px;height:80.0px;background:#3d3d3d;"></div>
<span class="ln" style="left:214.5px;top:67px">152</span>
<span class="ln" style="left:214.5px;top:83px">153</span>
<span class="ln" style="left:214.5px;top:99px">154</span>
<span class="ln" style="left:214.5px;top:115px">155</span>
<span class="ln" style="left:214.5px;top:131px">156</span>
<span class="ln" style="left:214.5px;top:147px">157</span>
<span class="ln" style="left:214.5px;top:163px">158</span>
<span class="ln" style="left:214.5px;top:179px">159</span>
<span class="ln" style="left:214.5px;top:195px">160</span>
<span class="ln" style="left:214.5px;top:211px">161</span>
<span class="ln" style="left:214.5px;top:227px">162</span>
<span class="ln" style="left:214.5px;top:243px">163</span>
<span class="ln" style="left:214.5px;top:259px">164</span>
<span class="ln" style="left:214.5px;top:275px">165</span>
<span class="ln" style="left:214.5px;top:291px">166</span>
<span class="ln" style="left:214.5px;top:307px">167</span>
<span class="ln" style="left:214.5px;top:323px">168</span>
<span class="ln" style="left:214.5px;top:339px">169</span>
<span class="ln" style="left:214.5px;top:355px">170</span>
<span class="ln" style="left:214.5px;top:371px">171</span>
<span class="ln" style="left:214.5px;top:387px">172</span>
<svg class="a" style="left:249.5px;top:100.5px;" width="10.0" height="9.0" viewBox="0 0 20 18"><circle cx="6.500" cy="10" r="6" fill="#4aa854"/><path d="M9 7.500a3.400 3.400 0 1 0 0 5" fill="none" stroke="#2b3d2e" stroke-width="1.600"/><path d="M16 17V4" stroke="#cf6a3c" stroke-width="1.600"/><path d="M12.500 6L16 1l3.500 5z" fill="#e0563e"/></svg>
<svg class="a" style="left:249.5px;top:260.5px;" width="10.0" height="9.0" viewBox="0 0 20 18"><circle cx="6.500" cy="10" r="6" fill="#4aa854"/><path d="M9 7.500a3.400 3.400 0 1 0 0 5" fill="none" stroke="#2b3d2e" stroke-width="1.600"/><path d="M16 17V4" stroke="#cf6a3c" stroke-width="1.600"/><path d="M12.500 6L16 1l3.500 5z" fill="#e0563e"/></svg>
<svg class="a" style="left:269.8px;top:70.5px;" width="7.5" height="9.0" viewBox="0 0 12 14"><path d="M1 1h10v7l-5 5-5-5z" fill="#2b2b2b" stroke="#7a7d80" stroke-width="1.300"/><path d="M3.500 6h5" stroke="#7a7d80" stroke-width="1.300"/></svg>
<svg class="a" style="left:269.8px;top:101.0px;" width="7.5" height="9.0" viewBox="0 0 12 14"><path d="M1 13h10V6L6 1 1 6z" fill="#2b2b2b" stroke="#7a7d80" stroke-width="1.300"/><path d="M3.500 8h5" stroke="#7a7d80" stroke-width="1.300"/></svg>
<svg class="a" style="left:269.8px;top:230.5px;" width="7.5" height="9.0" viewBox="0 0 12 14"><path d="M1 1h10v7l-5 5-5-5z" fill="#2b2b2b" stroke="#7a7d80" stroke-width="1.300"/><path d="M3.500 6h5" stroke="#7a7d80" stroke-width="1.300"/></svg>
<svg class="a" style="left:269.8px;top:262.5px;" width="7.5" height="9.0" viewBox="0 0 12 14"><path d="M1 1h10v7l-5 5-5-5z" fill="#2b2b2b" stroke="#7a7d80" stroke-width="1.300"/><path d="M3.500 6h5" stroke="#7a7d80" stroke-width="1.300"/></svg>
<svg class="a" style="left:269.8px;top:357.0px;" width="7.5" height="9.0" viewBox="0 0 12 14"><path d="M1 13h10V6L6 1 1 6z" fill="#2b2b2b" stroke="#7a7d80" stroke-width="1.300"/><path d="M3.500 8h5" stroke="#7a7d80" stroke-width="1.300"/></svg>
<div class="a" style="left:275px;top:67px;width:506px;height:333px;overflow:hidden"><div class="a" style="left:-275px;top:-67px">
<span class="cl" style="left:324.80px;top:67px"><span class="f">btnEdit</span>.setOnClickListener(<span class="k">new</span> View.OnClickListener() {</span>
<span class="cl" style="left:348.20px;top:83px"><span class="an">@Override</span></span>
<span class="cl" style="left:348.20px;top:99px"><span class="k">public void</span> <span class="m">onClick</span>(View v) {</span>
<span class="cl" style="left:371.60px;top:115px">Application_class.<span class="fi">contacts</span>.get(<span class="pu">pos</span>).setPhone(<span class="f">editPhone</span>.getText().toString().trim());</span>
<span class="cl" style="left:371.60px;top:131px">Application_class.<span class="fi">contacts</span>.get(<span class="pu">pos</span>).setName(<span class="f">editName</span>.getText().toString().trim());</span>
<span class="cl" style="left:371.60px;top:147px">Application_class.<span class="fi">contacts</span>.get(<span class="pu">pos</span>).setEmail(<span class="f">editEmail</span>.getText().toString().trim());</span>
<span class="cl" style="left:371.60px;top:179px">showProgress(<span class="k">true</span>)<span class="k">;</span></span>
<span class="cl" style="left:371.60px;top:195px"><span class="f">tvLoad</span>.setText(<span class="s hl">"Editing the changes..."</span>)<span class="k">;</span></span>
<span class="cl" style="left:371.60px;top:227px">Backendless.<span class="fi">Persistence</span>.save(Application_class.<span class="fi">contacts</span>.get(<span class="pu">pos</span>)<span class="k">, new</span></span>
<span class="cl" style="left:395.00px;top:243px"><span class="an">@Override</span></span>
<span class="cl" style="left:395.00px;top:259px"><span class="k">public void</span> <span class="m">handleResponse</span>(Contact response) {</span>
<span class="cl" style="left:418.40px;top:275px"><span class="f">infoChar</span>.setText(<span class="hl2">Application_class.<span class="fi">contacts</span>.get(<span class="pu">pos</span>).getName().toUpperCase().charAt(0)</span>+"");</span>
<span class="cl" style="left:418.40px;top:291px"><span class="f">infoName</span>.setText(Application_class.<span class="fi">contacts</span>.get(<span class="pu">pos</span>).getName());</span>
<span class="cl" style="left:418.40px;top:307px"><span class="f">infoPhone</span>.setText(Application_class.<span class="fi">contacts</span>.get(<span class="pu">pos</span>).getPhone());</span>
<span class="cl" style="left:418.40px;top:323px">showProgress(<span class="k">false</span>)<span class="k">;</span></span>
<span class="cl" style="left:418.40px;top:339px">Toast.<span class="i">makeText</span>(</span>
<span class="a hint" style="left:508.5px;top:341.5px">context:</span>
<span class="cl" style="left:278.00px;top:339px"></span>
<span class="cl" style="left:550.5px;top:339px">Contact_Info.<span class="k">this,</span></span>
<span class="a hint" style="left:664px;top:341.5px">text:</span>
<span class="cl" style="left:692.3px;top:339px"><span class="s">"Successfully Edited"</span><span class="k">,</span> Toast.LENGTH_SHORT).show();</span>
<span class="cl" style="left:395.00px;top:355px">}</span>
<span class="cl" style="left:395.00px;top:387px"><span class="an">@Override</span></span>
</div></div>
<div class="a" style="left:277.0px;top:393.0px;width:730.0px;height:6.0px;background:rgba(110,110,110,0.45);"></div>
<div class="a" style="left:996.5px;top:67.0px;width:10.5px;height:333.0px;background:#2b2b2b;"></div>
<div class="a" style="left:997.0px;top:69.0px;width:8.2px;height:8.0px;background:#c9960f;"></div>
<div class="a" style="left:996.3px;top:84.2px;width:4.3px;height:2.0px;background:#be9117;"></div>
<div class="a" style="left:996.3px;top:151.2px;width:4.3px;height:2.0px;background:#be9117;"></div>
<div class="a" style="left:996.3px;top:228.2px;width:4.3px;height:2.0px;background:#be9117;"></div>
<div class="a" style="left:996.3px;top:295.2px;width:4.3px;height:2.0px;background:#be9117;"></div>
<div class="a" style="left:996.3px;top:342.2px;width:4.3px;height:2.0px;background:#c9960f;"></div>
<div class="a" style="left:996.3px;top:348.2px;width:4.3px;height:2.0px;background:#c55f33;"></div>
<div class="a" style="left:998.0px;top:235.0px;width:3.5px;height:66.0px;background:#4f4f4f;"></div>
<div class="a" style="left:223.0px;top:400.0px;width:784.0px;height:20.0px;background:#3c3f41;"></div>
<span class="t" style="left:281.0px;top:405.0px;font-size:9.60px;letter-spacing:-0.130px;">Contact_Info</span>
<svg class="a" style="left:343.0px;top:408.0px;" width="4.0" height="6.0" viewBox="0 0 8 12"><path d="M1.5 1.5l4.5 4.5-4.5 4.5" fill="none" stroke="#7a7d80" stroke-width="1.6"/></svg>
<span class="t" style="left:353.5px;top:405.0px;font-size:9.60px;letter-spacing:-0.320px;">onCreate()</span>
<svg class="a" style="left:405.0px;top:408.0px;" width="4.0" height="6.0" viewBox="0 0 8 12"><path d="M1.5 1.5l4.5 4.5-4.5 4.5" fill="none" stroke="#7a7d80" stroke-width="1.6"/></svg>
<span class="t" style="left:416.0px;top:405.0px;font-size:9.60px;letter-spacing:-0.224px;">new OnClickListener</span>
<svg class="a" style="left:508.0px;top:408.0px;" width="4.0" height="6.0" viewBox="0 0 8 12"><path d="M1.5 1.5l4.5 4.5-4.5 4.5" fill="none" stroke="#7a7d80" stroke-width="1.6"/></svg>
<span class="t" style="left:519.5px;top:405.0px;font-size:9.60px;letter-spacing:-0.296px;">onClick()</span>
<svg class="a" style="left:563.0px;top:408.0px;" width="4.0" height="6.0" viewBox="0 0 8 12"><path d="M1.5 1.5l4.5 4.5-4.5 4.5" fill="none" stroke="#7a7d80" stroke-width="1.6"/></svg>
<span class="t" style="left:574.5px;top:405.0px;font-size:9.60px;letter-spacing:-0.200px;">new AsyncCallback</span>
<svg class="a" style="left:662.0px;top:408.0px;" width="4.0" height="6.0" viewBox="0 0 8 12"><path d="M1.5 1.5l4.5 4.5-4.5 4.5" fill="none" stroke="#7a7d80" stroke-width="1.6"/></svg>
<span class="t" style="left:673.0px;top:405.0px;font-size:9.60px;letter-spacing:-0.213px;">handleFault()</span>
<div class="a" style="left:19.0px;top:420.0px;width:988.0px;height:90.0px;background:#3c3f41;"></div>
<div class="a" style="left:19.0px;top:419.5px;width:988.0px;height:1.0px;background:#323232;"></div>
<span class="t" style="left:23.5px;top:424.0px;font-size:9.60px;letter-spacing:-0.203px;">Build:</span>
<span class="t" style="left:62.0px;top:424.0px;font-size:9.60px;letter-spacing:-0.447px;">Sync</span>
<svg class="a" style="left:88.5px;top:427.0px;" width="6.0" height="6.0" viewBox="0 0 12 12"><path d="M1.5 1.5l9 9M10.5 1.5l-9 9" stroke="#6e7275" stroke-width="1.5"/></svg>
<span class="t" style="left:112.0px;top:424.0px;font-size:9.60px;letter-spacing:0.106px;color:#c8c8c8;">Build Output</span>
<svg class="a" style="left:172.0px;top:427.0px;" width="6.0" height="6.0" viewBox="0 0 12 12"><path d="M1.5 1.5l9 9M10.5 1.5l-9 9" stroke="#6e7275" stroke-width="1.5"/></svg>
<div class="a" style="left:103.0px;top:437.5px;width:84.0px;height:2.5px;background:#747a80;"></div>
<span class="t" style="left:196.0px;top:424.0px;font-size:9.60px;letter-spacing:-0.103px;">Build Analyzer</span>
<svg class="a" style="left:263.0px;top:427.0px;" width="6.0" height="6.0" viewBox="0 0 12 12"><path d="M1.5 1.5l9 9M10.5 1.5l-9 9" stroke="#6e7275" stroke-width="1.5"/></svg>
<svg class="a" style="left:22.8px;top:446.2px;" width="13.5" height="13.5" viewBox="0 0 28 28"><g transform="translate(10.800,9.600) rotate(-40)" fill="#4caf57"><rect x="-9.700" y="-3" width="19.400" height="6.200"/><path d="M-2.300 0h4.600l.700 20.500h-6z"/></g></svg>
<svg class="a" style="left:23.8px;top:467.7px;" width="12.0" height="12.0" viewBox="0 0 24 24"><path d="M15.300 0L23.700 7.600 17.600 12.200 16.800 18.300 11.800 14.100 .800 23.700 0 22.200 8.800 11.100 4.600 6.900 11.100 6.100z" fill="#b4b7b8"/></svg>
<div class="a" style="left:40.0px;top:441.0px;width:1.0px;height:69.0px;background:#323232;"></div>
<svg class="a" style="left:59.0px;top:445.0px;" width="10.0" height="9.0" viewBox="0 0 20 18"><path d="M2 9.500l5.500 5.500L18 3" fill="none" stroke="#4aa854" stroke-width="3.800"/></svg>
<span class="t" style="left:73.0px;top:444.5px;font-size:9.60px;letter-spacing:-0.038px;color:#d0d0d0;font-weight:bold;">Build:</span>
<span class="t" style="left:103.0px;top:444.5px;font-size:9.60px;letter-spacing:-0.155px;">finished</span>
<span class="t" style="left:137.5px;top:444.5px;font-size:9.60px;letter-spacing:0.002px;color:#7f8385;">at 24-07-2020 16:15</span>
<span class="t" style="left:314.0px;top:444.5px;font-size:9.00px;letter-spacing:-0.224px;color:#6e7275;">2 s 893 ms</span>
<div class="a" style="left:359.5px;top:440.5px;width:626.0px;height:69.5px;background:#2b2b2b;"></div>
<span class="mo" style="left:370px;top:446px">BUILD SUCCESSFUL in 2s</span>
<span class="mo" style="left:370px;top:462px">20 actionable tasks: 4 executed, 16 up-to-date</span>
<span class="mo" style="left:370px;top:494px"><span style="color:#4a8ee0;text-decoration:underline;text-underline-offset:1.500px">Build Analyzer</span> results available</span>
<div class="a" style="left:0.0px;top:510.0px;width:1024.0px;height:18.0px;background:#3c3f41;"></div>
<div class="a" style="left:0.0px;top:510.0px;width:1024.0px;height:1.0px;background:#323232;"></div>
<svg class="a" style="left:27.0px;top:515.0px;" width="9.0" height="9.0" viewBox="0 0 18 18"><path d="M1 1l12 7-12 7z" fill="#b4b7ba"/><circle cx="14.500" cy="15" r="2.800" fill="#3ddc3d"/></svg>
<span class="t" style="left:39.0px;top:513.5px;font-size:9.60px;letter-spacing:-0.556px;"><u>4</u>: Run</span>
<svg class="a" style="left:81.0px;top:515.5px;" width="9.0" height="8.0" viewBox="0 0 18 16"><path d="M0 2h3M0 8h3M0 14h3" stroke="#b4b7ba" stroke-width="2.600"/><path d="M5 2h13M5 8h13M5 14h13" stroke="#b4b7ba" stroke-width="2.600"/></svg>
<span class="t" style="left:93.5px;top:513.5px;font-size:9.60px;letter-spacing:-0.900px;">TODO</span>
<div class="a" style="left:126.0px;top:510.5px;width:48.0px;height:16.5px;background:#2b2d2e;"></div>
<svg class="a" style="left:132.9px;top:513.6px;" width="11.8" height="11.8" viewBox="0 0 28 28"><g transform="translate(10.800,9.600) rotate(-40)" fill="#c4c7c9"><rect x="-9.700" y="-3" width="19.400" height="6.200"/><path d="M-2.300 0h4.600l.700 20.500h-6z"/></g></svg>
<span class="t" style="left:147.5px;top:513.5px;font-size:9.60px;letter-spacing:-0.337px;color:#dcdcdc;">Build</span>
<svg class="a" style="left:182.5px;top:515.0px;" width="11.0" height="9.0" viewBox="0 0 22 18"><path d="M2.500 16A8.500 8.500 0 0 1 19.500 16" fill="none" stroke="#b4b7ba" stroke-width="3.400"/><path d="M10 16l6-9" stroke="#b4b7ba" stroke-width="2.600"/></svg>
<span class="t" style="left:197.0px;top:513.5px;font-size:9.60px;letter-spacing:-0.272px;">Profiler</span>
<svg class="a" style="left:242.0px;top:516.0px;" width="9.0" height="7.0" viewBox="0 0 18 14"><path d="M0 1.500h18M0 7h11M0 12.500h15" stroke="#b4b7ba" stroke-width="2.600"/></svg>
<span class="t" style="left:255.5px;top:513.5px;font-size:9.60px;letter-spacing:-0.374px;"><u>6</u>: Logcat</span>
<svg class="a" style="left:309.5px;top:515.0px;" width="9.0" height="9.0" viewBox="0 0 18 18"><rect width="18" height="18" rx="1.500" fill="#b4b7ba"/><path d="M4 5l4 4-4 4M10 13h5" stroke="#3c3f41" stroke-width="1.800" fill="none"/></svg>
<span class="t" style="left:322.5px;top:513.5px;font-size:9.60px;letter-spacing:-0.182px;">Terminal</span>
<div class="a" style="left:0.0px;top:527.5px;width:1024.0px;height:16.0px;background:#3c3f41;"></div>
<div class="a" style="left:0.0px;top:527.0px;width:1024.0px;height:1.0px;background:#323232;"></div>
<svg class="a" style="left:4.0px;top:531.0px;" width="10.0" height="10.0" viewBox="0 0 20 20"><path d="M5 3h13v13H5z" fill="none" stroke="#9da0a3" stroke-width="1.800"/><path d="M2 6v12h12" fill="none" stroke="#9da0a3" stroke-width="1.800"/></svg>
<span class="t" style="left:22.0px;top:530.0px;font-size:9.60px;letter-spacing:-0.077px;">Install successfully finished in 1 s 286 ms. (2 minutes ago)</span>
<span class="t" style="left:839.0px;top:530.0px;font-size:9.60px;letter-spacing:-0.272px;">174:85</span>
<span class="t" style="left:877.0px;top:530.0px;font-size:9.60px;letter-spacing:-0.900px;">CRLF</span>
<span class="t" style="left:907.0px;top:530.0px;font-size:9.60px;letter-spacing:-0.549px;">UTF-8</span>
<span class="t" style="left:942.0px;top:530.0px;font-size:9.60px;letter-spacing:-0.346px;">4 spaces</span>
<svg class="a" style="left:985.5px;top:530.5px;" width="10.0" height="11.0" viewBox="0 0 20 22"><rect x="6" y="10" width="13" height="11" fill="#b4b7ba"/><path d="M2 10V6a4 4 0 0 1 8 0v4" fill="none" stroke="#b4b7ba" stroke-width="2.200"/></svg>
<svg class="a" style="left:1006.5px;top:530.5px;" width="10.0" height="11.0" viewBox="0 0 20 22"><path d="M4 7h12l2 3H2z" fill="#b4b7ba"/><rect x="6" y="1" width="8" height="6" fill="#b4b7ba"/><circle cx="10" cy="13" r="4.500" fill="#b4b7ba"/><path d="M1 22c0-5 4-6 9-6s9 1 9 6z" fill="#b4b7ba"/></svg>
<div class="a" style="left:13.0px;top:485.0px;width:193.5px;height:24.5px;background:#3a4733;border:1px solid #637a56;border-radius:3px"></div>
<svg class="a" style="left:38.0px;top:508.5px;" width="12.6" height="8.5" viewBox="0 0 25.200 17"><path d="M0 0h25.200L12.600 15.500z" fill="#3a4733"/><path d="M0 1L12.600 15.500 25.200 1" fill="none" stroke="#637a56" stroke-width="1.800"/></svg>
<span class="t" style="left:23.9px;top:491.6px;font-size:9.60px;letter-spacing:-0.118px;color:#c4c8c0;">Install successfully finished in 1 s 286 ms.</span>
<div class="a" style="left:1007.0px;top:47.0px;width:17.0px;height:463.0px;background:#3c3f41;"></div>
<div class="a" style="left:1007.0px;top:47.0px;width:1.0px;height:463.0px;background:#323232;"></div>
<svg class="a" style="left:1010.3px;top:53.5px;" width="12.0" height="9.2" viewBox="0 0 26 20"><path d="M2 19v-7c0-5 4-8 9-8 2-3 6-4 9-3 4 1 6 5 4 8-1 2-4 2-5 0-.6-1.200 .5-2.600 2-2-.5-1.800-3-2-4.500-.5 1 2 2 4 2 6v6.500h-4v-5h-5v5z" fill="#b4b7ba"/></svg>
<div class="a" style="left:1012.2px;top:66.8px;width:7.5px;height:7.5px;background:transparent;border:1.600px solid #9a9da0;border-radius:50%"></div>
<svg class="a" style="left:1012.5px;top:407.5px;" width="7.0" height="9.5" viewBox="0 0 14 19"><rect x="1" y="1" width="12" height="17" rx="1.500" fill="none" stroke="#b4b7ba" stroke-width="2"/><path d="M1 4h12M1 14h12" stroke="#b4b7ba" stroke-width="1.600"/></svg>
<span class="vtr" style="left:1021.0px;top:421.5px;font-size:9.40px;letter-spacing:-0.716px;color:#bbbbbb">Device File Explorer</span>
<div class="a" style="left:997.0px;top:429.0px;width:4.0px;height:1.5px;background:#9da0a3;"></div>
<svg class="a" style="left:997.0px;top:450.0px;" width="6.0" height="9.0" viewBox="0 0 12 18"><path d="M0 2h6a5 5 0 0 1 0 10H0" fill="none" stroke="#9da0a3" stroke-width="2.400"/></svg>
<div class="a" style="left:996.0px;top:465.0px;width:9.5px;height:16.0px;background:#4e5254;border-radius:2px"></div>
<svg class="a" style="left:997.0px;top:468.0px;" width="6.0" height="10.0" viewBox="0 0 12 20"><path d="M0 0h4v9h6L0 19z" fill="#b4b7ba" opacity=".800"/><path d="M0 18h8" stroke="#b4b7ba" stroke-width="2.400"/></svg>
<div class="a" style="left:0.0px;top:543.0px;width:1024.0px;height:33.0px;background:#1b1b1b;"></div>
<svg class="a" style="left:13.0px;top:553.5px;" width="13.0" height="13.0" viewBox="0 0 26 26"><path d="M0 3.600l10.600-1.500v10.300H0zM12 1.900L26 0v12.400H12zM0 13.700h10.600v10.300L0 22.500zM12 13.700h14V26l-14-1.900z" fill="#fff"/></svg>
<div class="a" style="left:39.0px;top:545.0px;width:274.0px;height:31.0px;background:#313131;border:1px solid #595959;border-bottom:none"></div>
<svg class="a" style="left:48.0px;top:554.0px;" width="13.0" height="13.0" viewBox="0 0 26 26"><circle cx="16" cy="10" r="7.500" fill="none" stroke="#e8eaeb" stroke-width="2.200"/><path d="M10.500 15.500L2 24" stroke="#e8eaeb" stroke-width="2.400"/></svg>
<span class="a" style="left:70.5px;top:553px;font-size:12.2px;line-height:16px;color:#e4e6e7;letter-spacing:-0.150px">Type here to search</span>
<div class="a" style="left:326.5px;top:554.5px;width:11.5px;height:11.5px;background:transparent;border:2px solid #f2f2f2;border-radius:50%"></div>
<svg class="a" style="left:365.0px;top:554.0px;" width="14.0" height="12.0" viewBox="0 0 28 24"><rect x="1" y="4" width="14" height="16" fill="none" stroke="#f2f2f2" stroke-width="2"/><path d="M20 1v22M26 4v3M26 10v4M26 17v3M1 1h4M11 1h4M1 23h4M11 23h4" stroke="#f2f2f2" stroke-width="2"/></svg>
<svg class="a" style="left:403.0px;top:550.5px;" width="18.0" height="18.0" viewBox="0 0 36 36"><circle cx="18" cy="17" r="15.500" fill="#3ddc84"/><path d="M18 5c3 0 5 3 5 7s-2 8-5 8-5-4-5-8 2-7 5-7z" fill="#1d3a6b"/><circle cx="18" cy="10.500" r="2" fill="#8ad1f5"/><path d="M18 14L9 34M18 14l9 20M12 27h12" stroke="#f4f6f7" stroke-width="2.600" fill="none"/></svg>
<div class="a" style="left:396.0px;top:574.0px;width:33.0px;height:2.0px;background:#76b9ed;"></div>
<svg class="a" style="left:442.0px;top:550.5px;" width="20.0" height="20.0" viewBox="0 0 40 40"><circle cx="20" cy="20" r="18" fill="#db4437"/><path d="M20 20L4.400 11A18 18 0 0 0 20 38z" fill="#0f9d58"/><path d="M20 20v18A18 18 0 0 0 35.600 11z" fill="#ffcd40"/><circle cx="20" cy="20" r="8.500" fill="#f1f1f1"/><circle cx="20" cy="20" r="6.500" fill="#4285f4"/></svg>
<div class="a" style="left:436.0px;top:574.0px;width:33.0px;height:2.0px;background:#76b9ed;"></div>
<svg class="a" style="left:482.0px;top:551.0px;" width="20.0" height="19.0" viewBox="0 0 40 38"><path d="M12 2l24 4v18l-24-4z" fill="#36a3e6"/><path d="M12 2l24 4v18l-24-4z" fill="none" stroke="#bfe3f7" stroke-width="1.600"/><path d="M4 28l16-5 14 6-16 6z" fill="#e4e6e8"/><path d="M18 35l16-6v2l-16 6-14-7v-2z" fill="#9aa0a6"/></svg>
<svg class="a" style="left:521.5px;top:550.5px;" width="20.0" height="20.0" viewBox="0 0 40 40"><circle cx="20" cy="20" r="18" fill="#1b7fd0"/><path d="M3 24c0-12 8-19 18-19 9 0 16 6 16 14 0 5-4 8-9 8-4 0-6-2-6-4 0-2 1-3 1-5 0-3-3-5-7-5-6 0-11 5-13 11z" fill="#35c1f1"/><path d="M5 28c4 7 12 11 20 9 4-1 7-3 9-6-8 3-17 0-19-8-.500-2 0-4 1-6-6 2-10 6-11 11z" fill="#4cd964" opacity=".850"/></svg>
<div class="a" style="left:553.0px;top:543.5px;width:39.0px;height:32.5px;background:#454545;"></div>
<svg class="a" style="left:563.5px;top:552.0px;" width="18.0" height="16.0" viewBox="0 0 42 36"><rect width="42" height="36" rx="3" fill="#21c27a"/><rect x="13" y="5" width="16" height="26" rx="2.500" fill="#1f3f66"/><rect x="16" y="9" width="10" height="17" fill="#e8f0f6"/></svg>
<div class="a" style="left:553.5px;top:574.0px;width:38.5px;height:2.0px;background:#76b9ed;"></div>
<svg class="a" style="left:819.5px;top:555.5px;" width="10.0" height="7.0" viewBox="0 0 20 14"><path d="M2 12l8-9 8 9" fill="none" stroke="#f2f2f2" stroke-width="2.200"/></svg>
<svg class="a" style="left:836.5px;top:555.0px;" width="14.5" height="9.0" viewBox="0 0 29 18"><path d="M7 18a6 6 0 0 1-1-11.900A8 8 0 0 1 21 5a6.500 6.500 0 0 1 1 13z" fill="#e8eaeb"/></svg>
<svg class="a" style="left:857.5px;top:553.5px;" width="12.0" height="12.0" viewBox="0 0 24 24"><path d="M3 22A19 19 0 0 1 22 3" fill="none" stroke="#e8eaeb" stroke-width="2"/><path d="M8 22A14 14 0 0 1 22 8" fill="none" stroke="#e8eaeb" stroke-width="2"/><path d="M13 22a9 9 0 0 1 9-9" fill="none" stroke="#e8eaeb" stroke-width="2"/><path d="M18 22a4 4 0 0 1 4-4v4z" fill="#e8eaeb"/></svg>
<svg class="a" style="left:876.0px;top:554.0px;" width="12.5" height="11.0" viewBox="0 0 25 22"><path d="M1 8h4l6-6v18l-6-6H1z" fill="none" stroke="#f2f2f2" stroke-width="1.800"/><path d="M15 7a6 6 0 0 1 0 8M18 4a10 10 0 0 1 0 14M21 1.500a14 14 0 0 1 0 19" fill="none" stroke="#f2f2f2" stroke-width="1.600"/></svg>
<span class="a" style="left:897.5px;top:553.5px;font-size:9.4px;line-height:12px;color:#f2f2f2;letter-spacing:-0.300px">ENG</span>
<span class="a" style="left:940px;top:546.5px;font-size:9.6px;line-height:12px;color:#f2f2f2;letter-spacing:-0.150px">16:17</span>
<span class="a" style="left:926px;top:561.5px;font-size:9.6px;line-height:12px;color:#f2f2f2;letter-spacing:0.050px">24-07-2020</span>
<svg class="a" style="left:990.5px;top:553.5px;" width="13.0" height="12.5" viewBox="0 0 26 25"><path d="M1 1h24v18H9l-5 5v-5H1z" fill="#f2f2f2"/><path d="M5 6h16M5 10h16M5 14h10" stroke="#1b1b1b" stroke-width="1.100"/></svg>
<div class="a" style="left:1020.0px;top:543.0px;width:1.0px;height:33.0px;background:#4a4a4a;"></div>
<div class="a" style="left:997.5px;top:560.5px;width:12.0px;height:12.0px;background:#1b1b1b;border:1.200px solid #f2f2f2;border-radius:50%"></div>
<span class="a" style="left:1001px;top:561.5px;font-size:8.6px;line-height:10px;color:#f2f2f2;font-weight:bold">2</span>
<div class="a" style="left:782.0px;top:74.0px;width:214.0px;height:459.0px;background:#141414;border-radius:24px"></div>
<div class="a" style="left:784.6px;top:76.0px;width:208.8px;height:454.8px;background:#0e0e0e;border-radius:21.500px;border-style:solid;border-width:1.300px;border-color:#2c2d2e #7b7d7e #303132 #7b7d7e"></div>
<div class="a" style="left:786.9px;top:77.6px;width:204.2px;height:451.6px;background:#060606;border-radius:19.500px;border-style:solid;border-width:1px 2px 1px 2px;border-color:#37393a #56585a #2a2b2c #56585a"></div>
<div class="a" style="left:817.0px;top:91.0px;width:10.5px;height:10.5px;background:#161b20;border-radius:50%;border:1px solid #262c33"></div>
<div class="a" style="left:843.0px;top:91.0px;width:10.5px;height:10.5px;background:#161b20;border-radius:50%;border:1px solid #262c33"></div>
<div class="a" style="left:865.0px;top:88.0px;width:48.5px;height:4.0px;background:#1e1e1e;border-radius:2px"></div>
<div class="a" style="left:920.0px;top:92.5px;width:7.5px;height:7.5px;background:#000;border-radius:50%"></div>
<div class="a" style="left:865.0px;top:516.0px;width:48.5px;height:4.5px;background:#1e1e1e;border-radius:2px"></div>
<div class="a" style="left:791px;top:109px;width:197px;height:394px;background:#000;border-radius:9px 9px 11px 11px;overflow:hidden">
<div class="a" style="left:0.0px;top:11.0px;width:197.0px;height:359.0px;background:#fafafa;"></div>
<div class="a" style="left:0.0px;top:0.0px;width:197.0px;height:11.5px;background:#3700b3;"></div>
<div class="a" style="left:0.0px;top:11.5px;width:197.0px;height:28.0px;background:#6200ee;"></div>
<div class="a" style="left:0.0px;top:370.0px;width:197.0px;height:24.0px;background:#000;"></div>
<span class="a" style="left:4.0px;top:0.5px;font-size:7.800px;line-height:10px;color:#fff;letter-spacing:-0.200px">4:17</span>
<svg class="a" style="left:170.5px;top:2.0px;" width="9.0" height="7.0" viewBox="0 0 18 14"><path d="M9 14L0 3.500a13.500 13.500 0 0 1 18 0z" fill="#fff"/></svg>
<svg class="a" style="left:188.5px;top:1.5px;" width="4.5" height="8.0" viewBox="0 0 9 16"><path d="M3 0h3v1.500h3V16H0V1.500h3z" fill="#fff"/></svg>
<span class="a" style="left:7.5px;top:20.0px;font-size:10px;line-height:14px;color:#fff;font-weight:bold;letter-spacing:-0.300px">Contact_List</span>
<span class="a" style="left:51.0px;top:46.5px;font-size:17.200px;line-height:22px;color:#6f6f6f;font-weight:bold;font-style:italic;letter-spacing:-0.350px">Contact List</span>
<div class="a" style="left:5.0px;top:75.0px;width:187.0px;height:37.0px;background:#b1bcb3;border-radius:5.500px;box-shadow:0 .5px 1px rgba(0,0,0,.250)"></div>
<span class="a" style="left:5.5px;top:78.5px;font-size:21.500px;line-height:26px;color:#4b4b4b">A</span>
<span class="a" style="left:33.5px;top:80.5px;font-size:8.800px;line-height:12px;color:#505050">Ansari</span>
<span class="a" style="left:33.5px;top:97.5px;font-size:6.950px;line-height:10px;color:#505050">Ansari@gmail.com</span>
<div class="a" style="left:5.0px;top:124.0px;width:187.0px;height:37.0px;background:#b1bcb3;border-radius:5.500px;box-shadow:0 .5px 1px rgba(0,0,0,.250)"></div>
<span class="a" style="left:5.5px;top:127.5px;font-size:21.500px;line-height:26px;color:#4b4b4b">K</span>
<span class="a" style="left:33.5px;top:129.5px;font-size:8.800px;line-height:12px;color:#505050">Kanna</span>
<span class="a" style="left:33.5px;top:146.5px;font-size:6.950px;line-height:10px;color:#505050">kandas@gmail.com</span>
<div class="a" style="left:5.0px;top:173.0px;width:187.0px;height:37.0px;background:#b1bcb3;border-radius:5.500px;box-shadow:0 .5px 1px rgba(0,0,0,.250)"></div>
<span class="a" style="left:5.5px;top:176.5px;font-size:21.500px;line-height:26px;color:#4b4b4b">V</span>
<span class="a" style="left:33.5px;top:178.5px;font-size:8.800px;line-height:12px;color:#505050">Veera</span>
<span class="a" style="left:33.5px;top:195.5px;font-size:6.950px;line-height:10px;color:#505050">veeramani@gmail.com</span>
<svg class="a" style="left:37.5px;top:378.0px;" width="7.0" height="8.5" viewBox="0 0 14 17"><path d="M13 .5v16L.5 8.500z" fill="#b9b9b9"/></svg>
<div class="a" style="left:94.5px;top:378.5px;width:7.5px;height:7.5px;background:#b9b9b9;border-radius:50%"></div>
<div class="a" style="left:151.5px;top:378.5px;width:7.5px;height:7.5px;background:#b9b9b9;border-radius:1px"></div>
</div>
<div class="a" style="left:1000.4px;top:73.3px;width:23.6px;height:297.9px;background:#f0f0f0;box-shadow:0 0 0 .6px #1c1c1c"></div>
<div class="a" style="left:1008.5px;top:84.5px;width:5.5px;height:1.0px;background:#7a7a7a;"></div>
<svg class="a" style="left:1013.0px;top:99.5px;" width="12.0" height="12.0" viewBox="0 0 24 24"><path d="M12 1v11" stroke="#5f7d8c" stroke-width="2.400"/><path d="M6.500 4.500a9 9 0 1 0 11 0" fill="none" stroke="#5f7d8c" stroke-width="2.400"/></svg>
<svg class="a" style="left:1013.0px;top:124.5px;" width="12.0" height="12.0" viewBox="0 0 24 24"><path d="M2 8h5l6-6v20l-6-6H2z" fill="#5f7d8c"/><path d="M16 7a7 7 0 0 1 0 10M19 3a12 12 0 0 1 0 18" fill="none" stroke="#5f7d8c" stroke-width="2.200"/></svg>
<svg class="a" style="left:1013.0px;top:149.5px;" width="12.0" height="12.0" viewBox="0 0 24 24"><path d="M4 8h5l6-6v20l-6-6H4z" fill="#5f7d8c"/><path d="M18 8a6 6 0 0 1 0 8" fill="none" stroke="#5f7d8c" stroke-width="2.200"/></svg>
<svg class="a" style="left:1013.0px;top:174.5px;" width="12.0" height="12.0" viewBox="0 0 24 24"><path d="M9 2l13 13-7 7L2 9z" fill="none" stroke="#5f7d8c" stroke-width="2.200"/></svg>
<svg class="a" style="left:1013.0px;top:199.5px;" width="12.0" height="12.0" viewBox="0 0 24 24"><path d="M9 3l12 12-6 6L3 9z" fill="none" stroke="#5f7d8c" stroke-width="2.200"/><path d="M14 1a9 9 0 0 1 9 9" fill="none" stroke="#5f7d8c" stroke-width="1.800"/></svg>
<svg class="a" style="left:1013.0px;top:224.5px;" width="12.0" height="12.0" viewBox="0 0 24 24"><path d="M1 6h6l2-3h6l2 3h6v15H1z" fill="#5f7d8c"/><circle cx="12" cy="13" r="4.200" fill="#f0f0f0"/></svg>
<svg class="a" style="left:1013.0px;top:249.5px;" width="12.0" height="12.0" viewBox="0 0 24 24"><circle cx="10" cy="10" r="7" fill="none" stroke="#5f7d8c" stroke-width="2.400"/><path d="M15 15l8 8M7 10h6M10 7v6" stroke="#5f7d8c" stroke-width="2.200"/></svg>
<svg class="a" style="left:1013.0px;top:274.5px;" width="12.0" height="12.0" viewBox="0 0 24 24"><path d="M20 3v18L4 12z" fill="none" stroke="#5f7d8c" stroke-width="2.200"/></svg>
<svg class="a" style="left:1013.0px;top:299.5px;" width="12.0" height="12.0" viewBox="0 0 24 24"><circle cx="12" cy="12" r="8.500" fill="none" stroke="#5f7d8c" stroke-width="2.200"/></svg>
<svg class="a" style="left:1013.0px;top:324.5px;" width="12.0" height="12.0" viewBox="0 0 24 24"><rect x="4" y="4" width="16" height="16" fill="none" stroke="#5f7d8c" stroke-width="2.200"/></svg>
<svg class="a" style="left:1013.0px;top:349.5px;" width="12.0" height="12.0" viewBox="0 0 24 24"><circle cx="4" cy="12" r="2.200" fill="#5f7d8c"/><circle cx="12" cy="12" r="2.200" fill="#5f7d8c"/><circle cx="20" cy="12" r="2.200" fill="#5f7d8c"/></svg>
</body>
</html>
